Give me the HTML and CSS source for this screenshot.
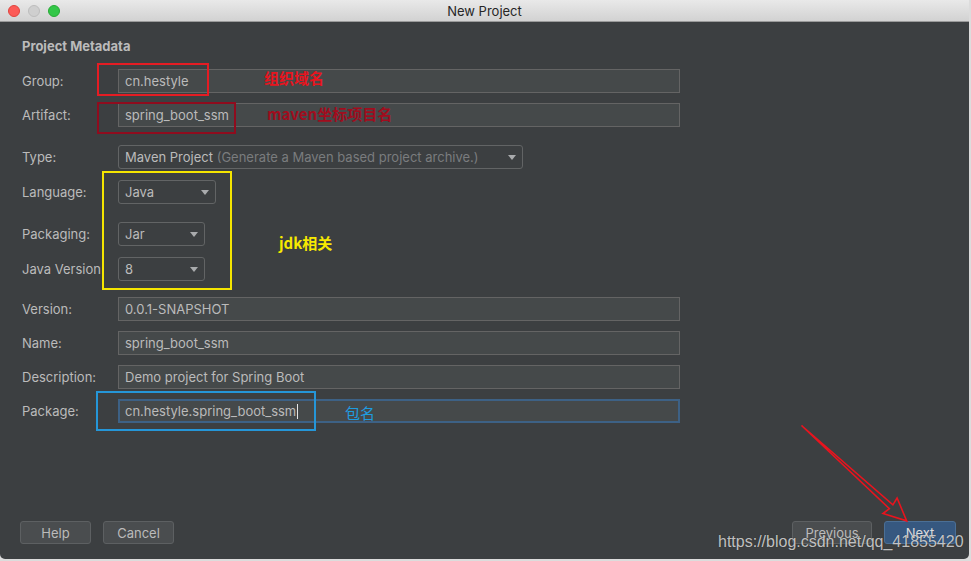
FILE: index.html
```html
<!DOCTYPE html>
<html>
<head>
<meta charset="utf-8">
<title>New Project</title>
<link rel="stylesheet" href="styles.css">
</head>
<body>
<div class="window">
  <div class="titlebar">
    <div class="lights">
      <span class="light red"></span>
      <span class="light gray"></span>
      <span class="light green"></span>
    </div>
    <div class="title">New Project</div>
    <div></div>
  </div>

  <div class="main">
    <div class="section-title">Project Metadata</div>

    <div class="row first">
      <div class="label">Group:</div>
      <div class="input w-full">cn.hestyle</div>
    </div>
    <div class="row gap-s">
      <div class="label">Artifact:</div>
      <div class="input w-full">spring_boot_ssm</div>
    </div>
    <div class="row gap-l">
      <div class="label">Type:</div>
      <div class="combo w-type"><span>Maven Project <span class="hint">(Generate a Maven based project archive.)</span></span><span class="arrow"></span></div>
    </div>
    <div class="row gap-m">
      <div class="label">Language:</div>
      <div class="combo w-lang"><span>Java</span><span class="arrow"></span></div>
    </div>
    <div class="row gap-l">
      <div class="label">Packaging:</div>
      <div class="combo w-small"><span>Jar</span><span class="arrow"></span></div>
    </div>
    <div class="row gap-m">
      <div class="label">Java Version</div>
      <div class="combo w-small"><span>8</span><span class="arrow"></span></div>
    </div>
    <div class="row gap-v">
      <div class="label">Version:</div>
      <div class="input w-full">0.0.1-SNAPSHOT</div>
    </div>
    <div class="row gap-s">
      <div class="label">Name:</div>
      <div class="input w-full">spring_boot_ssm</div>
    </div>
    <div class="row gap-s">
      <div class="label">Description:</div>
      <div class="input w-full">Demo project for Spring Boot</div>
    </div>
    <div class="row gap-s">
      <div class="label">Package:</div>
      <div class="input w-full focused">cn.hestyle.spring_boot_ssm<span class="caret"></span></div>
    </div>
  </div>

  <div class="footer">
    <div class="btn-group">
      <div class="btn w-71">Help</div>
      <div class="btn w-71">Cancel</div>
    </div>
    <div class="btn-group">
      <div class="btn w-80">Previous</div>
      <div class="btn w-72 primary">Next</div>
    </div>
  </div>

  <!-- annotations drawn over the dialog -->
  <div class="box box-red"></div>
  <div class="box box-darkred"></div>
  <div class="box box-yellow"></div>
  <div class="box box-blue"></div>
  <div class="note note-red">组织域名</div>
  <div class="note note-darkred">maven坐标项目名</div>
  <div class="note note-yellow">jdk相关</div>
  <div class="note note-blue">包名</div>

  <svg class="arrow-overlay" width="969" height="559" viewBox="0 0 969 559">
    <polygon transform="translate(801.5 425.5) rotate(42.2)"
      points="0,0 121,-2.6 119.5,-10.5 142,0 119.5,10.5 121,2.6"
      fill="none" stroke="#e8141e" stroke-width="1.6" stroke-linejoin="miter"/>
  </svg>

  <div class="watermark">https://blog.csdn.net/qq_41855420</div>
</div>
</body>
</html>
```

FILE: styles.css
```css
html, body {
  margin: 0;
  padding: 0;
}

body {
  background: #dcdcdc;
  font-family: Inter, "Liberation Sans", sans-serif;
  font-size: 13px;
}

.window {
  position: relative;
  width: 969px;
  height: 559px;
  background: #3c3f41;
  border-radius: 0 0 5px 5px;
  display: flex;
  flex-direction: column;
  overflow: hidden;
}

/* title bar */
.titlebar {
  height: 21px;
  flex: none;
  border-bottom: 1px solid #9a9a9a;
  background: linear-gradient(#e9e9e9, #d2d2d2);
  display: grid;
  grid-template-columns: 1fr auto 1fr;
  align-items: center;
}

.lights {
  display: flex;
  gap: 8px;
  padding-left: 8px;
}

.light {
  width: 12px;
  height: 12px;
  border-radius: 50%;
  box-sizing: border-box;
}

.light.red { background: #fc5b57; border: 1px solid #e0443e; }
.light.gray { background: #cfcfcf; border: 1px solid #bdbdbd; }
.light.green { background: #33c748; border: 1px solid #27aa35; }

.title {
  color: #262626;
  font-size: 13px;
}

/* main form */
.main {
  flex: 1;
  padding: 16px 0 0 22px;
  color: #bbbbbb;
}

.section-title {
  font-weight: 700;
  line-height: 16px;
  color: #bbbbbb;
}

.row {
  display: flex;
  align-items: center;
  height: 24px;
  margin-top: 10px;
}

.row.first { margin-top: 15px; }
.row.gap-s { margin-top: 10px; }
.row.gap-m { margin-top: 11px; }
.row.gap-l { margin-top: 18px; }
.row.gap-v { margin-top: 16px; }

.label {
  width: 96px;
  flex: none;
  color: #bbbbbb;
  white-space: nowrap;
}

.input {
  height: 24px;
  box-sizing: border-box;
  border: 1px solid #646464;
  background: #45494a;
  color: #bbbbbb;
  padding: 0 6px;
  display: flex;
  align-items: center;
  white-space: nowrap;
}

.input.focused {
  border: 2px solid #3d6185;
  padding: 0 5px;
}

.caret {
  display: inline-block;
  width: 1px;
  height: 15px;
  background: #e6e6e6;
  margin-left: 1px;
}

.w-full { width: 562px; }

.combo {
  height: 24px;
  box-sizing: border-box;
  border: 1px solid #626465;
  border-radius: 3px;
  background: #3c3f41;
  color: #bbbbbb;
  padding: 0 6px 0 6px;
  display: flex;
  align-items: center;
  justify-content: space-between;
  white-space: nowrap;
}

.combo .hint { color: #7a7c7e; }

.arrow {
  width: 0;
  height: 0;
  border-left: 4.5px solid transparent;
  border-right: 4.5px solid transparent;
  border-top: 5px solid #a9abad;
}

.w-type { width: 405px; }
.w-lang { width: 98px; }
.w-small { width: 87px; }

/* footer buttons */
.footer {
  flex: none;
  display: flex;
  justify-content: space-between;
  padding: 0 13px 15px 20px;
}

.btn-group {
  display: flex;
  gap: 12px;
}

.btn {
  height: 23px;
  box-sizing: border-box;
  border: 1px solid #5d6062;
  border-radius: 3px;
  background: #4a4d4f;
  color: #bbbbbb;
  display: flex;
  align-items: center;
  justify-content: center;
}

.btn.primary {
  background: #365880;
  border-color: #4b6f95;
  color: #dcdcdc;
}

.w-71 { width: 71px; }
.w-72 { width: 72px; }
.w-80 { width: 80px; }

/* annotation overlays */
.box {
  position: absolute;
  box-sizing: border-box;
  border: 2px solid;
}

.box-red { left: 97px; top: 63px; width: 112px; height: 33px; border-color: #e51c23; }
.box-darkred { left: 97px; top: 102px; width: 139px; height: 32px; border-color: #8f0c1e; }
.box-yellow { left: 102px; top: 171px; width: 130px; height: 119px; border-color: #f5e500; }
.box-blue { left: 96px; top: 391px; width: 220px; height: 40px; border-color: #2596d8; }

.note {
  position: absolute;
  font-family: "Noto Sans CJK SC", "Noto Sans", sans-serif;
  font-size: 15px;
  font-weight: 700;
  line-height: 15px;
  white-space: nowrap;
}

.note-red { left: 264px; top: 70px; color: #e8141e; }
.note-darkred { left: 267px; top: 106px; color: #a00d1e; }
.note-yellow { left: 279px; top: 235px; color: #f7ea00; }
.note-blue { left: 345px; top: 405px; color: #1f9ce0; font-weight: 400; }

.arrow-overlay {
  position: absolute;
  left: 0;
  top: 0;
  pointer-events: none;
}

.watermark {
  position: absolute;
  left: 718px;
  top: 533px;
  font-family: "Liberation Sans", Arial, sans-serif;
  font-size: 16px;
  line-height: 18px;
  color: rgba(236, 236, 236, 0.8);
  text-shadow: 0 0 1px rgba(0, 0, 0, 0.6);
  white-space: nowrap;
}
```
